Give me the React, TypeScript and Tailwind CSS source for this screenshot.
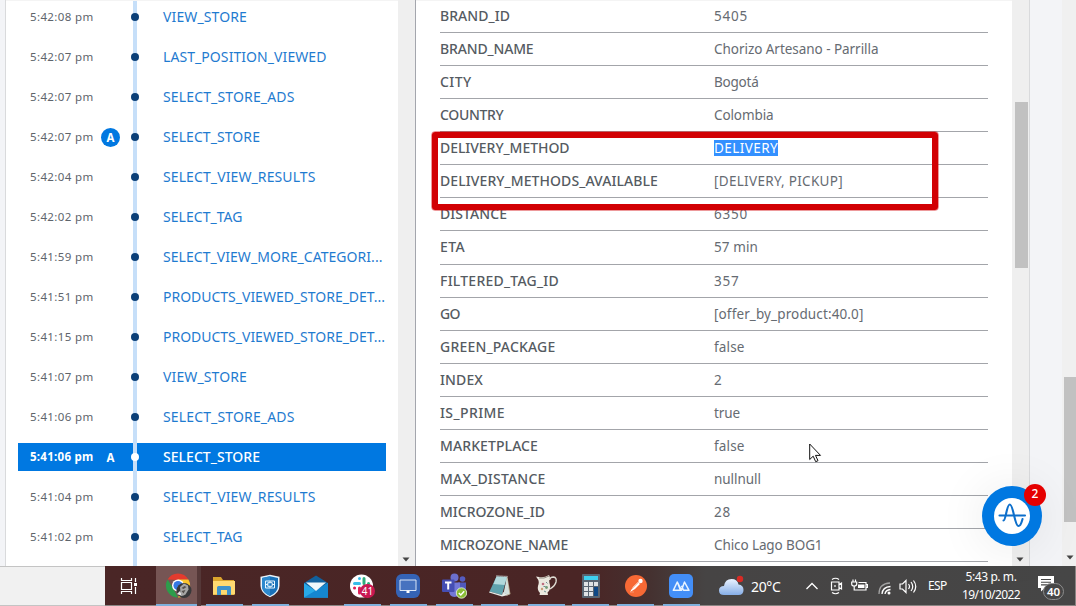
import { useLayoutEffect, useRef, useState } from "react";
import type { ReactNode } from "react";

/* Text whose tracking is adjusted so that it fills a given width. */
function Fit({ text, width, className = "" }: { text: string; width: number; className?: string }) {
  const ref = useRef<HTMLSpanElement>(null);
  const [spacing, setSpacing] = useState(0);
  useLayoutEffect(() => {
    const el = ref.current;
    if (!el) return;
    el.style.letterSpacing = "0px";
    const natural = el.getBoundingClientRect().width;
    setSpacing((width - natural) / text.length);
    el.style.letterSpacing = `${(width - natural) / text.length}px`;
  }, [text, width]);
  return (
    <span ref={ref} className={`inline-block whitespace-nowrap ${className}`} style={{ letterSpacing: `${spacing}px` }}>
      {text}
    </span>
  );
}

type Event = { time: string; name: string; width: number; mark?: boolean; active?: boolean };

const events: Event[] = [
  { time: "5:42:08 pm", name: "VIEW_STORE", width: 84 },
  { time: "5:42:07 pm", name: "LAST_POSITION_VIEWED", width: 163.5 },
  { time: "5:42:07 pm", name: "SELECT_STORE_ADS", width: 131.5 },
  { time: "5:42:07 pm", name: "SELECT_STORE", width: 97, mark: true },
  { time: "5:42:04 pm", name: "SELECT_VIEW_RESULTS", width: 152.5 },
  { time: "5:42:02 pm", name: "SELECT_TAG", width: 79.5 },
  { time: "5:41:59 pm", name: "SELECT_VIEW_MORE_CATEGORI...", width: 219.5 },
  { time: "5:41:51 pm", name: "PRODUCTS_VIEWED_STORE_DET...", width: 222 },
  { time: "5:41:15 pm", name: "PRODUCTS_VIEWED_STORE_DET...", width: 222 },
  { time: "5:41:07 pm", name: "VIEW_STORE", width: 84 },
  { time: "5:41:06 pm", name: "SELECT_STORE_ADS", width: 131.5 },
  { time: "5:41:06 pm", name: "SELECT_STORE", width: 97, mark: true, active: true },
  { time: "5:41:04 pm", name: "SELECT_VIEW_RESULTS", width: 152.5 },
  { time: "5:41:02 pm", name: "SELECT_TAG", width: 79.5 },
];

const properties: [string, number, string, number][] = [
  ["BRAND_ID", 70, "5405", 34],
  ["BRAND_NAME", 93.5, "Chorizo Artesano - Parrilla", 164.5],
  ["CITY", 31.5, "Bogotá", 44.5],
  ["COUNTRY", 63.5, "Colombia", 59.5],
  ["DELIVERY_METHOD", 129.5, "DELIVERY", 64],
  ["DELIVERY_METHODS_AVAILABLE", 218, "[DELIVERY, PICKUP]", 129],
  ["DISTANCE", 67, "6350", 34],
  ["ETA", 25, "57 min", 44],
  ["FILTERED_TAG_ID", 119, "357", 25.5],
  ["GO", 20, "[offer_by_product:40.0]", 149.5],
  ["GREEN_PACKAGE", 115.5, "false", 30.5],
  ["INDEX", 43, "2", 8.5],
  ["IS_PRIME", 65, "true", 26],
  ["MARKETPLACE", 98, "false", 30.5],
  ["MAX_DISTANCE", 105.5, "nullnull", 47],
  ["MICROZONE_ID", 105, "28", 17],
  ["MICROZONE_NAME", 128, "Chico Lago BOG1", 108.5],
];

function EventRow({ e }: { e: Event }) {
  return (
    <div className="flex h-10 shrink-0 items-center pr-3 pl-3">
      <div className={`flex h-7 w-full items-center ${e.active ? "bg-[#0078e1] text-white" : ""}`}>
        <div className={`w-[83px] shrink-0 pl-3 text-[11.5px] leading-7 ${e.active ? "font-bold" : "text-[#5e646b]"}`}>
          <Fit text={e.time} width={63.5} />
        </div>
        <div className="flex w-[28px] shrink-0">
          {e.mark && (
            <span className={`flex size-[19px] items-center justify-center rounded-full pt-px text-[11.5px] leading-none font-bold text-white ${e.active ? "" : "bg-[#0078e1]"}`}>
              A
            </span>
          )}
        </div>
        <div className={`flex w-[12px] shrink-0 items-center justify-center self-stretch ${e.active ? "bg-[linear-gradient(90deg,transparent_4px,#c6dff9_4px,#c6dff9_8px,transparent_8px)]" : ""}`}>
          <span className={`size-2 rounded-full ${e.active ? "bg-white" : "bg-[#0b3f78]"}`} />
        </div>
        <div className={`pl-[22px] text-[14px] leading-7 ${e.active ? "font-medium" : "text-[#1f7bd0]"}`}>
          <Fit text={e.name} width={e.width} />
        </div>
      </div>
    </div>
  );
}

function Arrow() {
  return (
    <svg width="8" height="5" viewBox="0 0 8 5" className="shrink-0">
      <path d="M0.5 0.5h7L4 4.5z" fill="#444" />
    </svg>
  );
}

function Slot({ w, line, active, children }: { w: string; line?: boolean; active?: boolean; children: ReactNode }) {
  return (
    <div className={`flex h-full shrink-0 flex-col items-center ${w} ${active ? "border-r-4 border-[#553838] bg-[#765554]" : ""}`}>
      <div className={`flex h-[38px] items-center justify-center pt-0.5 ${active ? "pl-1" : ""}`}>{children}</div>
      <div className={`h-0.5 ${active ? "w-full" : "w-[37px]"} ${line ? "bg-[#7fb0dc]" : ""}`} />
    </div>
  );
}

function Taskbar() {
  return (
    <div className="flex h-10 shrink-0 font-['Noto_Sans',sans-serif] text-white">
      <div className="w-[105px] shrink-0 border-y border-[#c4c4c4] bg-[#f1f1f1]" />
      <div className="flex grow bg-[linear-gradient(90deg,#4a2626_0px,#4a2525_480px,#453130_545px,#464444_600px,#464646_100%)] shadow-[inset_-1px_-1px_0_#8a8583]">
        <Slot w="w-[51px] pr-[3px]">
          <svg width="18" height="18" viewBox="0 0 18 18" fill="none" stroke="#fff" strokeWidth="1.2">
            <path d="M1.5 1v2.5h10V1M1.5 17v-2.5h10V17M1.5 5.500h10v7h-10zM15.500 1v4M15.500 10v7" />
            <path d="M14 6h3v3h-3z" fill="#fff" stroke="none" />
          </svg>
        </Slot>
        <Slot w="w-[45px]" line active>
          <svg width="28" height="26" viewBox="0 0 28 26">
            <path d="M2.600 6.500A12 12 0 0 1 23.400 6.500L13 7z" fill="#e33b2e" />
            <path d="M2.600 6.500L8 15l5 9.500A12 12 0 0 1 2.600 6.500" fill="#2d9c4b" />
            <path d="M23.400 6.500A12 12 0 0 1 13 24.500L18 15l-5-8.500z" fill="#fbc52d" />
            <circle cx="13" cy="12.500" r="6" fill="#fff" />
            <circle cx="13" cy="12.500" r="4.600" fill="#3478e5" />
            <circle cx="19" cy="17.500" r="7.500" fill="#38383a" />
            <path d="M15 14l4-3.500 4 2 .5 4-3 5-3 1.500-2-3z" fill="#a6a6a5" />
            <path d="M16.500 15l3-2 2 1-3 2zm0 3l4-1-2 3.500z" fill="#55504d" />
            <path d="M12 21l3-3 2 5z" fill="#e4e4e4" />
          </svg>
        </Slot>
        <Slot w="w-[46px]" line>
          <svg width="24" height="22" viewBox="0 0 24 22">
            <path d="M1 2h8l2 3h11v15H1z" fill="#dca52d" />
            <path d="M1 6h22v13.500H1z" fill="#ffd971" />
            <path d="M5 20v-7.500q0-1.500 1.500-1.500h11q1.500 0 1.500 1.500V20h-4v-5H9v5z" fill="#3e92cc" />
          </svg>
        </Slot>
        <Slot w="w-[46px]" line>
          <svg width="22" height="24" viewBox="0 0 22 24">
            <path d="M11 .8l9.500 2v9q0 7.500-9.500 11.500Q1.500 19.300 1.500 11.800v-9z" fill="#eaf4fc" />
            <path d="M11 2.200l8 1.700v8q0 6.200-8 10-8-3.800-8-10v-8z" fill="#1971b9" />
            <path d="M11 2.200v19.700q-8-3.800-8-10v-8z" fill="#2d89ce" />
            <path d="M6.500 7h9v7h-9zM6.500 10.500h2.300M13.200 10.500h2.300M11 7v1.500M11 12.500V14M8.800 8.700h4.400v3.600H8.800z" fill="none" stroke="#e7f5ff" />
          </svg>
        </Slot>
        <Slot w="w-[46px]">
          <svg width="24" height="23" viewBox="0 0 24 23">
            <path d="M0 8L12 .5 24 8v14.500H0z" fill="#12609d" />
            <path d="M0 8l12 8L24 8v14.500H0z" fill="#28a9e8" />
            <path d="M24 8v14.500H0z" fill="#1586d0" />
            <path d="M2 7.500h20L12 16z" fill="#eff7fb" />
          </svg>
        </Slot>
        <Slot w="w-[46px]" line>
          <div className="relative flex">
            <svg width="26" height="26" viewBox="0 0 26 26">
              <circle cx="12.500" cy="13" r="11.500" fill="#fff" />
              <g strokeWidth="3" strokeLinecap="round" fill="none">
                <path d="M10.500 5.500v.1M5.500 10.500h5" stroke="#38bde9" />
                <path d="M15 5.500v5M19.500 10.500h.1" stroke="#30ae7c" />
                <path d="M10.500 15v5M5.500 15h.1" stroke="#df2259" />
                <path d="M15 15h4.500M15 19.500h.1" stroke="#ebb331" />
              </g>
            </svg>
            <span className="absolute top-[11px] left-[11px] flex h-[14px] w-[15px] items-center justify-center rounded-full bg-[#c91852] text-[10px] leading-none">41</span>
          </div>
        </Slot>
        <Slot w="w-[46px]" line>
          <svg width="24" height="24" viewBox="0 0 24 24">
            <rect width="24" height="24" rx="6" fill="#3563b5" />
            <path d="M4 6h16v10.500H4z" fill="#4772bf" stroke="#dbe6f7" />
            <path d="M10.500 16.500h3V19h-3z" fill="#fff" />
          </svg>
        </Slot>
        <Slot w="w-[46px]" line>
          <svg width="26" height="26" viewBox="0 0 26 26">
            <circle cx="13.500" cy="4.500" r="4" fill="#6c70cc" />
            <circle cx="21.500" cy="6" r="2.800" fill="#555cc0" />
            <path d="M17 9.500h8v7q0 4-4 4h-4z" fill="#4f58bb" />
            <path d="M8 9.500h11v9q0 5-5.500 5.500Q8 23.500 8 18z" fill="#7378d7" />
            <rect x="1" y="6.500" width="12.500" height="12.500" rx="1" fill="#454eb3" />
            <path d="M4 9.500h6.500M7.200 9.500V16.500" stroke="#fff" strokeWidth="2" />
            <circle cx="20.500" cy="20" r="5.200" fill="#8abd35" stroke="#eef7df" strokeWidth=".8" />
            <path d="M17.800 20l2 2 3.400-3.700" fill="none" stroke="#fff" strokeWidth="1.500" />
          </svg>
        </Slot>
        <Slot w="w-[45px]" line>
          <svg width="24" height="24" viewBox="0 0 24 24">
            <path d="M18 3l1.500 0 3 17-4 2z" fill="#b9a98c" />
            <path d="M8.500 2.500L19 3l-5 18L1.500 17.500z" fill="#5fa2ad" />
            <path d="M8.500 2.500L19 3l-2.500 8-11-1z" fill="#b2d9dc" />
            <path d="M1.500 17.500L14 21l1-3 5 3-6 1.500L1 18.500z" fill="#e6ece8" />
            <path d="M8.500 1.800L19.500 2.500" stroke="#e8eeee" strokeWidth="1.200" strokeDasharray="1 1" />
            <path d="M19 3l2.500 17.500-6-1z" fill="#d3e0dd" />
          </svg>
        </Slot>
        <Slot w="w-[46px] pl-0.5" line>
          <svg width="23" height="24" viewBox="0 0 23 24">
            <path d="M14.500 6q.5-3 4-3 3.500.5 2.500 5-1 4-6 7" fill="none" stroke="#dedbd2" strokeWidth="1.400" />
            <path d="M1 2.500l3 .5q5 1 10-2l1 2.500q-1.500 3 0 7.500 1 5-2.500 7.500l.5 2.500H4.500l.5-2q-3-3-2-7 1.500-4 0-6.500z" fill="#ebe8df" />
            <path d="M4 4q5 1 10-2" stroke="#938a80" fill="none" />
            <circle cx="8" cy="10" r="1.300" fill="#bd6d7f" />
            <circle cx="11.500" cy="13.500" r="1.400" fill="#739c78" />
            <circle cx="7" cy="15" r="1.200" fill="#ca9c76" />
            <path d="M11 8l1.500 1.500M8.500 12.500h2M9 17l2 1" stroke="#6b9091" />
          </svg>
        </Slot>
        <Slot w="w-[45px]" line>
          <svg width="18" height="24" viewBox="0 0 18 24">
            <rect width="18" height="24" rx="1" fill="#596471" />
            <path d="M2 2h14v4H2z" fill="#3fd0ef" />
            <path d="M2 8h4v4H2zM7 8h4v4H7zM12 8h4v4h-4zM2 13h4v4H2zM7 13h4v4H7zM2 18h4v4H2zM7 18h4v4H7z" fill="#e0e3e6" />
            <path d="M12 13h4v9h-4z" fill="#0e4886" />
          </svg>
        </Slot>
        <Slot w="w-[45px]" line>
          <svg width="22" height="22" viewBox="0 0 22 22">
            <circle cx="11" cy="11" r="11" fill="#f76935" />
            <path d="M5 17l3-5 5-5 2 2-5 5z" fill="#fff" />
            <circle cx="15.500" cy="6" r="2.200" fill="#fff" />
            <path d="M7 14l6-6M5 17h4" stroke="#f9ad8d" strokeWidth=".7" />
          </svg>
        </Slot>
        <Slot w="w-[46px]" line>
          <svg width="24" height="24" viewBox="0 0 24 24">
            <rect width="24" height="24" rx="5" fill="#438ef7" />
            <path d="M8.300 8L4.300 16.300h7.200zM8.300 8l4.200 8.300L15.500 8l4.500 8.300h-5.500l-2-4.500" fill="none" stroke="#e8f3ff" strokeWidth="1.500" strokeLinejoin="round" />
          </svg>
        </Slot>
        <div className="flex h-10 grow items-center">
          <svg width="26" height="22" viewBox="0 0 26 22" className="ml-3.5 shrink-0">
            <defs>
              <linearGradient id="cloud" x2="0" y2="1">
                <stop stopColor="#eaf2ff" />
                <stop offset="1" stopColor="#86aee7" />
              </linearGradient>
            </defs>
            <path d="M6 20q-5 0-5-4.500T6 11q1-7 7.500-7 6 0 7 5.500 5 .5 5 5.500 0 5-5 5z" fill="url(#cloud)" />
            <circle cx="22" cy="4" r="3.200" fill="#d72b25" />
          </svg>
          <span className="ml-[7px] w-[54px] shrink-0 text-[14px]"><Fit text="20°C" width={29.5} /></span>
          <svg width="14" height="8" viewBox="0 0 14 8" fill="none" stroke="#fff" strokeWidth="1.300" className="shrink-0">
            <path d="M1.500 7L7 1.500 12.500 7" />
          </svg>
          <svg width="14" height="18" viewBox="0 0 14 18" fill="none" stroke="#fff" strokeWidth="1.200" className="ml-[11px] shrink-0">
            <path d="M2 2.500q3.500-2.500 7 0M2 15.500q3.500 2.500 7 0M1.500 5h7.500v8H1.500zM9 7.500l2.500-1.500v6L9 10.500" />
            <path d="M5 8v2" />
          </svg>
          <svg width="17" height="14" viewBox="0 0 17 14" fill="none" stroke="#fff" strokeWidth="1.200" className="ml-[7px] shrink-0">
            <path d="M7.500 3.500H15v7.500H5M15.500 5.500h1v3h-1M2 .5v2M4.500 .5v2M.7 3h5v2q0 2-2.500 2T.7 5zM3.200 7v4H6" />
            <path d="M7 5.500h6.500V9H7z" fill="#fff" stroke="none" />
          </svg>
          <svg width="15" height="15" viewBox="0 0 15 15" fill="none" strokeWidth="1.300" className="mt-0.5 ml-[9px] shrink-0">
            <path d="M2 14Q2 3.500 13 3" stroke="#a2a2a2" />
            <path d="M5 14q.5-7 8.500-7.500M8 14q.5-4 5.500-4.500" stroke="#fff" />
            <circle cx="12" cy="13" r="1.500" fill="#fff" />
          </svg>
          <svg width="18" height="15" viewBox="0 0 18 15" fill="none" stroke="#fff" strokeWidth="1.200" className="ml-[7px] shrink-0">
            <path d="M1 5h2.500L7 1.500v12L3.500 10H1zM9.500 5q2 2.500 0 5M12 3q3.500 4.500 0 9M14.500 1.500q4.500 6 0 12" />
          </svg>
          <span className="ml-[11px] w-[33px] shrink-0 text-[12px]"><Fit text="ESP" width={18.5} /></span>
          <div className="flex w-[60px] shrink-0 flex-col items-center text-[12px] leading-[18px]">
            <Fit text="5:43 p. m." width={51} />
            <Fit text="19/10/2022" width={58} />
          </div>
          <div className="relative ml-[17px] flex h-6 shrink-0">
            <svg width="17" height="16" viewBox="0 0 17 16" className="mt-0.5">
              <path d="M0 0h16v12H7l-4 3.500V12H0z" fill="#fff" />
              <path d="M3 3.500h10M3 6.200h10M3 8.900h7" stroke="#464646" strokeWidth="1.100" />
            </svg>
            <span className="absolute top-[9px] left-[5px] flex h-[17px] w-[21px] items-center justify-center rounded-full border border-[#8d8d8d] bg-[#464646] text-[11.500px] leading-none font-semibold">40</span>
          </div>
        </div>
      </div>
    </div>
  );
}

export default function App() {
  return (
    <div className="relative flex h-[606px] w-[1076px] flex-col overflow-hidden bg-[#f3f4f7] font-['Noto_Sans',sans-serif]">
      <div className="flex h-[566px] shrink-0 overflow-hidden">
        <div className="ml-[5px] flex w-[393px] shrink-0 flex-col overflow-hidden border-l border-[#d9dadc] bg-[linear-gradient(90deg,#fff_127px,#c6dff9_127px,#c6dff9_131px,#fff_131px)] shadow-[inset_0_1px_0_#f4f4f4]">
          <div className="-mt-[3px] flex flex-col">
            {events.map((e, i) => (
              <EventRow key={i} e={e} />
            ))}
          </div>
        </div>
        <div className="flex w-[18px] shrink-0 items-end justify-center border-r border-[#a4a6ad] bg-[#efefef] pr-px pb-1">
          <Arrow />
        </div>
        <div className="w-[596px] shrink-0 overflow-hidden bg-white pr-6 pl-6 shadow-[inset_0_1px_0_#f4f4f4]">
          {properties.map(([name, nw, value, vw]) => (
            <div
              key={name}
              className={`flex border-b border-[#a3a5aa] text-[14px] leading-8 text-[#555b62] ${name === "ETA" ? "h-[34px]" : "h-[33px]"}`}
            >
              <div className="w-[274px] shrink-0 font-medium">
                <Fit text={name} width={nw} />
              </div>
              <div className="text-[13.500px] text-[#666b72]">
                <Fit
                  text={value}
                  width={vw}
                  className={name === "DELIVERY_METHOD" ? "mt-2 h-4 bg-[#3390ff] leading-4 text-white" : ""}
                />
              </div>
            </div>
          ))}
        </div>
        <div className="flex w-[18px] shrink-0 flex-col items-center justify-between border-r border-[#d9dadc] bg-[#efefef] pb-1">
          <div className="mt-[102px] ml-px h-[166px] w-[13px] shrink-0 bg-[#c1c1c1]" />
          <div className="flex pr-px">
            <Arrow />
          </div>
        </div>
        <div className="w-[32px] shrink-0 bg-[#f3f4f7]" />
        <div className="flex grow flex-col items-end justify-between bg-[#f0f0f0] pb-[6px]">
          <div className="mt-[377px] h-[145px] w-3 bg-[#c1c1c1]" />
          <div className="flex pr-0.5">
            <Arrow />
          </div>
        </div>
      </div>

      <Taskbar />

      {/* Annotation rectangle */}
      <div className="absolute top-[131px] left-[431px] h-[80px] w-[508px] rounded-[4px] border border-[#d20004]/40">
        <div className="h-full w-full rounded-[3px] border-[6px] border-[#d20004]" />
      </div>

      {/* Mouse pointer */}
      <svg className="absolute top-[443px] left-[809px]" width="13" height="20" viewBox="0 0 13 20">
        <path d="M.7 1v15.500l3.500-3.300 2.500 5.500 2.300-1-2.500-5.300h5z" fill="#fff" stroke="#111" />
      </svg>

      {/* Help launcher */}
      <div className="absolute top-[486px] left-[982px] flex size-[60px] items-center justify-center rounded-full bg-[#0078e1] shadow-[0_2px_50px_rgba(0,0,0,0.09)]">
        <svg width="36" height="36" viewBox="0 0 36 36">
          <circle cx="18" cy="18" r="18" fill="#fff" />
          <path d="M5.500 17.500h25.500M9.500 22.500c2.500 0 3-16 6.300-16 3.700 0 4.700 21.500 8.700 21.500 2.500 0 3-3.500 4-7" fill="none" stroke="#0d6fcb" strokeWidth="2.100" strokeLinecap="round" />
        </svg>
        <span className="absolute -top-0.5 left-[42px] flex size-[22px] items-center justify-center rounded-full bg-[#e50000] pb-0.5 text-[12px] leading-none font-medium text-white">2</span>
      </div>
    </div>
  );
}
